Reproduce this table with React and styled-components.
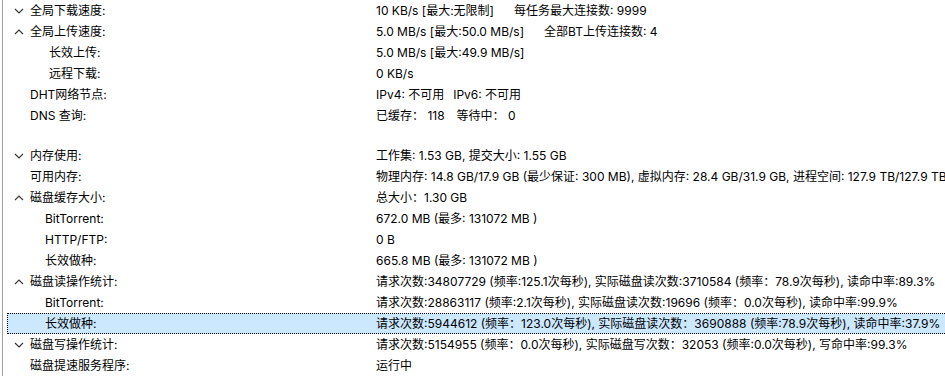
import React from "react";
import styled, { createGlobalStyle } from "styled-components";

const GlobalStyle = createGlobalStyle`
  html, body {
    margin: 0;
    padding: 0;
    background: #fff;
    overflow: hidden;
  }
  body {
    font-family: "Inter", "Noto Sans CJK SC", sans-serif;
    font-size: 12px;
    color: #000;
  }
`;

const Panel = styled.div`
  width: 1200px;
  height: 376px;
  margin-left: 2px;
  border-left: 1px solid #a0a0a0;
  display: flex;
  flex-direction: column;
`;

const Row = styled.div`
  display: grid;
  grid-template-columns: 368px 1fr;
  height: 21px;
  line-height: 19px;
  margin-left: 4px;
  box-sizing: border-box;
  white-space: pre;
  background: ${(p) => (p.$selected ? "#cce8ff" : "transparent")};
  border: 1px dotted ${(p) => (p.$selected ? "#000" : "transparent")};
  border-right: none;
`;

const Label = styled.div`
  position: relative;
  padding-left: ${(p) => p.$indent}px;
`;

const Chevron = styled.svg`
  position: absolute;
  left: 6px;
  top: 6px;
`;

const Value = styled.div`
  overflow: visible;
`;

const Gap = styled.span`
  display: inline-block;
  width: ${(p) => p.$w}px;
`;

const ChevronIcon = ({ up }) => (
  <Chevron width="10" height="8" viewBox="0 0 10 8">
    <path
      d={up ? "M1 6 L5 2 L9 6" : "M1 2 L5 6 L9 2"}
      fill="none"
      stroke="#333"
      strokeWidth="1.1"
    />
  </Chevron>
);

const rows = [
  { chev: "down", label: "全局下载速度:", value: ["10 KB/s [最大:无限制]", 20, "每任务最大连接数: 9999"] },
  { chev: "up", label: "全局上传速度:", value: ["5.0 MB/s [最大:50.0 MB/s]", 20, "全部BT上传连接数: 4"] },
  { indent: 41, label: "长效上传:", value: ["5.0 MB/s [最大:49.9 MB/s]"] },
  { indent: 41, label: "远程下载:", value: ["0 KB/s"] },
  { label: "DHT网络节点:", value: ["IPv4: 不可用", 9, "IPv6: 不可用"] },
  { label: "DNS 查询:", value: ["已缓存： 118", 12, "等待中： 0"] },
  { label: "", value: [""] },
  { chev: "down", label: "内存使用:", value: ["工作集: 1.53 GB, 提交大小: 1.55 GB"] },
  { label: "可用内存:", value: ["物理内存: 14.8 GB/17.9 GB (最少保证: 300 MB), 虚拟内存: 28.4 GB/31.9 GB, 进程空间: 127.9 TB/127.9 TB"] },
  { chev: "up", label: "磁盘缓存大小:", value: ["总大小：1.30 GB"] },
  { indent: 37, label: "BitTorrent:", value: ["672.0 MB (最多: 131072 MB )"] },
  { indent: 37, label: "HTTP/FTP:", value: ["0 B"] },
  { indent: 37, label: "长效做种:", value: ["665.8 MB (最多: 131072 MB )"] },
  { chev: "up", label: "磁盘读操作统计:", value: ["请求次数:34807729 (频率:125.1次每秒), 实际磁盘读次数:3710584 (频率：78.9次每秒), 读命中率:89.3%"] },
  { indent: 37, label: "BitTorrent:", value: ["请求次数:28863117 (频率:2.1次每秒), 实际磁盘读次数:19696 (频率：0.0次每秒), 读命中率:99.9%"] },
  { indent: 37, selected: true, label: "长效做种:", value: ["请求次数:5944612 (频率：123.0次每秒), 实际磁盘读次数：3690888 (频率:78.9次每秒), 读命中率:37.9%"] },
  { chev: "down", label: "磁盘写操作统计:", value: ["请求次数:5154955 (频率：0.0次每秒), 实际磁盘写次数：32053 (频率:0.0次每秒), 写命中率:99.3%"] },
  { label: "磁盘提速服务程序:", value: ["运行中"] },
];

const App = () => (
  <>
    <GlobalStyle />
    <Panel>
      {rows.map((r, i) => (
        <Row key={i} $selected={r.selected}>
          <Label $indent={r.indent || 22}>
            {r.chev && <ChevronIcon up={r.chev === "up"} />}
            {r.label}
          </Label>
          <Value>
            {r.value.map((part, j) =>
              typeof part === "number" ? <Gap key={j} $w={part} /> : <span key={j}>{part}</span>
            )}
          </Value>
        </Row>
      ))}
    </Panel>
  </>
);

export default App;
